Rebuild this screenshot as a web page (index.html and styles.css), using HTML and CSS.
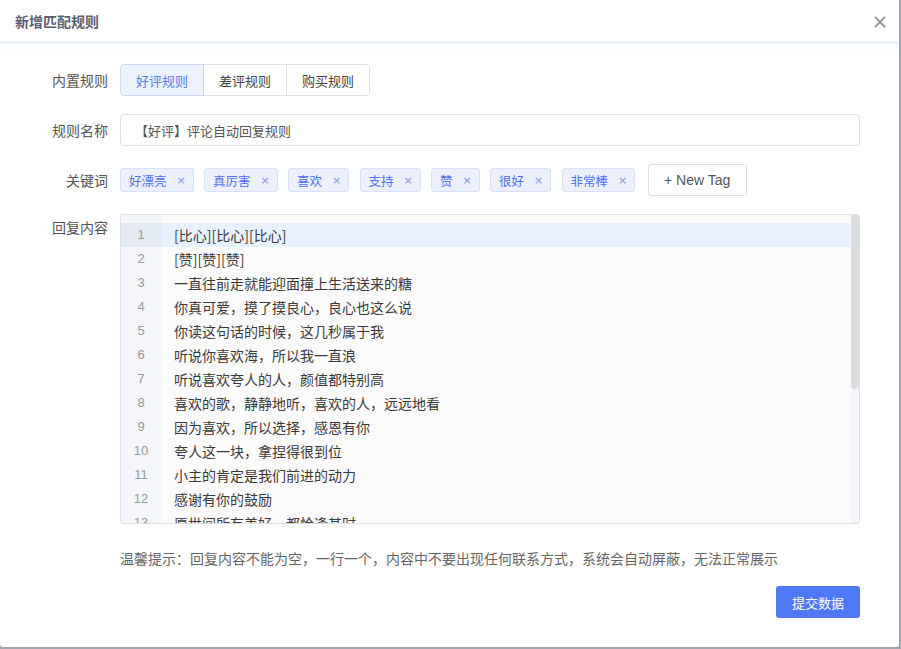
FILE: index.html
```html
<!DOCTYPE html>
<html lang="zh-CN">
<head>
<meta charset="utf-8">
<link rel="stylesheet" href="styles.css">
</head>
<body>
<div class="dialog">
  <div class="header">
    <span class="title">新增匹配规则</span>
    <svg class="close" width="12" height="12" viewBox="0 0 12 12"><path d="M1.5 1.5L10.5 10.5M10.5 1.5L1.5 10.5" stroke="#999" stroke-width="2" stroke-linecap="round"/></svg>
  </div>
  <div class="body">
    <div class="row">
      <div class="label">内置规则</div>
      <div class="field">
        <div class="seg">
          <span class="seg-btn active">好评规则</span>
          <span class="seg-btn">差评规则</span>
          <span class="seg-btn">购买规则</span>
        </div>
      </div>
    </div>
    <div class="row">
      <div class="label">规则名称</div>
      <div class="field">
        <div class="input">【好评】评论自动回复规则</div>
      </div>
    </div>
    <div class="row">
      <div class="label">关键词</div>
      <div class="field tags">
        <span class="tag">好漂亮<i class="x">×</i></span>
        <span class="tag">真厉害<i class="x">×</i></span>
        <span class="tag">喜欢<i class="x">×</i></span>
        <span class="tag">支持<i class="x">×</i></span>
        <span class="tag">赞<i class="x">×</i></span>
        <span class="tag">很好<i class="x">×</i></span>
        <span class="tag">非常棒<i class="x">×</i></span>
        <span class="new-tag">+ New Tag</span>
      </div>
    </div>
    <div class="row top">
      <div class="label">回复内容</div>
      <div class="field">
        <div class="editor">
          <div class="gutter">
            <div class="ln active">1</div>
            <div class="ln">2</div>
            <div class="ln">3</div>
            <div class="ln">4</div>
            <div class="ln">5</div>
            <div class="ln">6</div>
            <div class="ln">7</div>
            <div class="ln">8</div>
            <div class="ln">9</div>
            <div class="ln">10</div>
            <div class="ln">11</div>
            <div class="ln">12</div>
            <div class="ln">13</div>
          </div>
          <div class="lines">
            <div class="line active">[比心][比心][比心]</div>
            <div class="line">[赞][赞][赞]</div>
            <div class="line">一直往前走就能迎面撞上生活送来的糖</div>
            <div class="line">你真可爱，摸了摸良心，良心也这么说</div>
            <div class="line">你读这句话的时候，这几秒属于我</div>
            <div class="line">听说你喜欢海，所以我一直浪</div>
            <div class="line">听说喜欢夸人的人，颜值都特别高</div>
            <div class="line">喜欢的歌，静静地听，喜欢的人，远远地看</div>
            <div class="line">因为喜欢，所以选择，感恩有你</div>
            <div class="line">夸人这一块，拿捏得很到位</div>
            <div class="line">小主的肯定是我们前进的动力</div>
            <div class="line">感谢有你的鼓励</div>
            <div class="line">愿世间所有美好，都恰逢其时</div>
          </div>
          <div class="scrollbar"><div class="thumb"></div></div>
        </div>
        <div class="hint">温馨提示：回复内容不能为空，一行一个，内容中不要出现任何联系方式，系统会自动屏蔽，无法正常展示</div>
      </div>
    </div>
    <div class="footer">
      <span class="submit">提交数据</span>
    </div>
  </div>
</div>
</body>
</html>
```
FILE: styles.css
```css
* { box-sizing: border-box; }
html, body { margin: 0; padding: 0; }
body {
  width: 901px;
  height: 649px;
  background: #a2a5ae;
  font-family: "Noto Sans CJK SC", "Noto Sans", sans-serif;
  font-size: 13px;
  color: #333;
  overflow: hidden;
}
.dialog {
  width: 899px;
  height: 647px;
  background: #fff;
  border-radius: 0 0 3px 3px;
}
.header {
  height: 43px;
  border-bottom: 1px solid #dfe8f8;
  display: flex;
  align-items: center;
  justify-content: space-between;
  padding: 0 13px 0 15px;
}
.title {
  font-size: 14px;
  font-weight: bold;
  color: #5a6072;
}
.close { margin-top: 1px; }
.body {
  padding: 21px 39px 0 0;
  background: linear-gradient(#f9fbff, #fff 14px);
}
.row {
  display: flex;
  align-items: center;
  margin-bottom: 18px;
}
.row.top { align-items: flex-start; }
.label {
  width: 108px;
  text-align: right;
  color: #555;
  font-size: 14px;
  flex: none;
}
.row.top .label { padding-top: 3px; }
.field {
  margin-left: 12px;
  flex: 1;
}
.seg {
  display: flex;
  height: 32px;
}
.seg-btn {
  width: 84px;
  display: flex;
  align-items: center;
  justify-content: center;
  border: 1px solid #dcdfe6;
  margin-left: -1px;
  color: #444;
  background: #fff;
}
.seg-btn:first-child { margin-left: 0; border-radius: 4px 0 0 4px; }
.seg-btn:last-child { border-radius: 0 4px 4px 0; }
.seg-btn.active {
  background: #ecf2fe;
  border-color: #cbd8f4;
  color: #4f80f0;
  position: relative;
}
.input {
  height: 32px;
  border: 1px solid #dcdfe6;
  border-radius: 4px;
  display: flex;
  align-items: center;
  padding-left: 14px;
  color: #555;
}
.tags {
  display: flex;
  align-items: center;
  gap: 10.5px;
  height: 32px;
}
.tag {
  height: 24px;
  display: flex;
  align-items: center;
  padding: 0 8px;
  background: #ecf0fd;
  border: 1px solid #d6e0fb;
  border-radius: 3px;
  color: #4e6ef2;
  font-size: 12.5px;
}
.tag .x {
  font-style: normal;
  margin-left: 10px;
  width: 8px;
  display: inline-block;
  text-align: center;
  color: #8594ea;
  font-family: "DejaVu Sans", sans-serif;
  font-size: 11px;
}
.new-tag {
  margin-left: 2px;
  height: 32px;
  width: 99px;
  display: flex;
  align-items: center;
  justify-content: center;
  border: 1px solid #dcdfe6;
  border-radius: 3px;
  font-family: "Liberation Sans", sans-serif;
  font-size: 14px;
  color: #555;
}
.editor {
  height: 310px;
  border: 1px solid #dcdfe6;
  border-radius: 3px;
  display: flex;
  overflow: hidden;
  background: #fbfbfb;
}
.gutter {
  width: 40px;
  flex: none;
  background: #f4f6f9;
  padding-top: 8px;
}
.ln {
  height: 24px;
  line-height: 24px;
  text-align: center;
  font-size: 13px;
  color: #999;
  font-family: "Liberation Sans", sans-serif;
}
.ln.active { background: #e3eaf4; }
.lines {
  flex: 1;
  padding-top: 8px;
  overflow: hidden;
}
.line {
  height: 24px;
  line-height: 24px;
  padding-left: 13px;
  font-size: 14px;
  color: #3a3a3a;
  white-space: nowrap;
}
.line.active { background: #e8f2fe; }
.scrollbar {
  width: 8px;
  flex: none;
  background: #f3f5fa;
}
.thumb {
  height: 174px;
  background: #dadbde;
  border-radius: 0 0 4px 4px;
}
.hint {
  margin-top: 24px;
  color: #666;
  font-size: 14px;
  line-height: 20px;
}
.footer {
  display: flex;
  justify-content: flex-end;
  margin-top: 9px;
}
.submit {
  width: 84px;
  height: 32px;
  background: #4e78f5;
  color: #fff;
  border-radius: 3px;
  display: flex;
  align-items: center;
  justify-content: center;
  font-size: 13px;
}
```
